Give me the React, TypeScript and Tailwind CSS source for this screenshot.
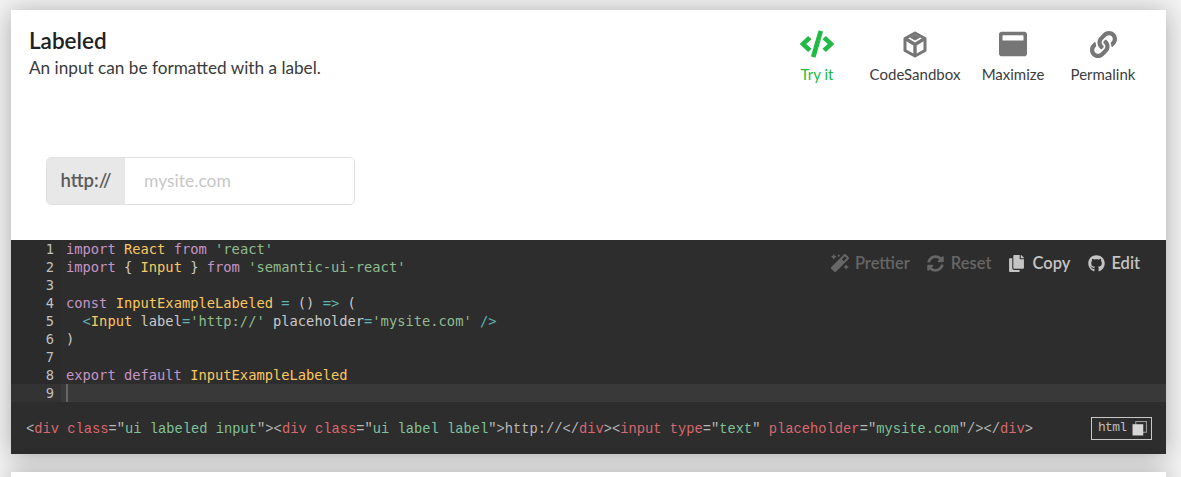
import { FaCode, FaCopy, FaGithub, FaLink, FaMagic, FaSyncAlt, FaWindowMaximize } from "react-icons/fa";
import type { ReactNode } from "react";

const sans = "font-['Lato','Open_Sans',sans-serif]";
const mono = "font-['DejaVu_Sans_Mono','Liberation_Mono',monospace]";

const K = ({ children }: { children: ReactNode }) => <span className="text-[#c695c6]">{children}</span>;
const C = ({ children }: { children: ReactNode }) => <span className="text-[#fac863]">{children}</span>;
const S = ({ children }: { children: ReactNode }) => <span className="text-[#8fbc8f]">{children}</span>;
const O = ({ children }: { children: ReactNode }) => <span className="text-[#5fb3b3]">{children}</span>;
const R = ({ children }: { children: ReactNode }) => <span className="text-[#d9686f]">{children}</span>;
const G = ({ children }: { children: ReactNode }) => <span className="text-[#7fc29b]">{children}</span>;

const lines: ReactNode[] = [
  <><K>import</K> <C>React</C> <K>from</K> <S>'react'</S></>,
  <><K>import</K> {"{ "}<C>Input</C>{" } "}<K>from</K> <S>'semantic-ui-react'</S></>,
  <></>,
  <><K>const</K> <C>InputExampleLabeled</C> <O>=</O> () <O>=&gt;</O> (</>,
  <>  <O>&lt;</O><C>Input</C> label<O>=</O><S>'http://'</S> placeholder<O>=</O><S>'mysite.com'</S> <O>/&gt;</O></>,
  <>)</>,
  <></>,
  <><K>export</K> <K>default</K> <C>InputExampleLabeled</C></>,
  <></>,
];

function SandboxIcon() {
  return (
    <svg viewBox="0 0 24 27" className="h-[27px] w-[24px]" fill="none" stroke="#767676" strokeLinejoin="round">
      <path d="M12 2 22 7.5v12L12 25 2 19.5v-12Z" strokeWidth="3" />
      <path d="M3 8 12 13.5 21 8M12 13.5V24" strokeWidth="3.4" />
      <path d="M7.5 6.5 12 4l4.5 2.5L12 9Z" fill="#767676" strokeWidth="1" />
    </svg>
  );
}

function Action({ icon, label, className, active }: { icon: ReactNode; label: string; className: string; active?: boolean }) {
  return (
    <div className={`flex flex-col items-center ${className}`}>
      <div className={`flex h-[30px] items-center justify-center ${active ? "text-[#21ba45]" : "text-[#767676]"}`}>{icon}</div>
      <div className={`mt-[5px] text-[15px] leading-[20px] ${active ? "text-[#21ba45]" : "text-[#3d3d3d]"}`}>{label}</div>
    </div>
  );
}

function Tool({ icon, label, on, className }: { icon: ReactNode; label: string; on?: boolean; className: string }) {
  return (
    <div className={`flex items-center font-semibold ${on ? "text-[#c4c4c4]" : "text-[#666666]"} ${className}`}>
      {icon}
      <span className="text-[16.5px] leading-[20px]">{label}</span>
    </div>
  );
}

export default function App() {
  return (
    <div className={`h-[477px] overflow-hidden bg-[#f3f3f3] pl-[11px] pr-[15px] pt-[10px] ${sans}`}>
      <div className="bg-white shadow-[0_2px_24px_rgba(0,0,0,0.3)]">
        <div className="flex h-[230px] flex-col">
          <div className="flex pl-[18px] pr-[22px] pt-[16px]">
            <div>
              <h1 className="text-[22.5px] font-semibold leading-[30px] text-[#212121]">Labeled</h1>
              <p className="-mt-[1px] text-[17.2px] leading-[25px] text-[#3a3a3a]">An input can be formatted with a label.</p>
            </div>
            <div className="ml-auto flex pt-[3px]">
              <Action active className="w-[98px]" label="Try it" icon={<FaCode className="text-[34px]" />} />
              <Action className="w-[98px]" label="CodeSandbox" icon={<SandboxIcon />} />
              <Action className="w-[98px]" label="Maximize" icon={<FaWindowMaximize className="text-[28px]" />} />
              <Action className="w-[82px]" label="Permalink" icon={<FaLink className="text-[27px]" />} />
            </div>
          </div>
          <div className="pl-[35px] pt-[73px]">
            <div className="flex h-[48px] w-[309px] overflow-hidden rounded-[5px] border border-[#e0e0e0]">
              <div className="flex w-[78px] items-center justify-center bg-[#e8e8e8] text-[18.5px] font-semibold text-[#5a5a5a]">http://</div>
              <input
                placeholder="mysite.com"
                className="min-w-0 flex-1 bg-white pl-[19px] text-[17.5px] text-[#333] outline-none placeholder:text-[#c7c7c7]"
              />
            </div>
          </div>
        </div>

        <div className="bg-[#2d2d2d]">
          <div className={`relative text-[13.75px] leading-[18px] text-[#c9c9c9] ${mono}`}>
            {lines.map((line, i) => (
              <div key={i} className={`flex h-[18px] ${i === 8 ? "bg-[#393939]" : ""}`}>
                <div className={`w-[50px] shrink-0 pr-[7px] text-right text-[#c0c0c0] ${i === 8 ? "bg-[#333333]" : "bg-[#2b2b2b]"}`}>{i + 1}</div>
                <div className="w-[5px] shrink-0" />
                {i === 8 ? <div className="w-[2px] bg-[#666666]" /> : <div className="whitespace-pre">{line}</div>}
              </div>
            ))}
            <div className={`absolute right-[26px] top-[13px] flex ${sans}`}>
              <Tool className="mr-[17px]" label="Prettier" icon={<FaMagic className="mr-[6px] text-[18px]" />} />
              <Tool className="mr-[17px]" label="Reset" icon={<FaSyncAlt className="mr-[7px] text-[17px]" />} />
              <Tool on className="mr-[18px]" label="Copy" icon={<FaCopy className="mr-[7px] text-[17px]" />} />
              <Tool on className="" label="Edit" icon={<FaGithub className="mr-[6px] text-[17px]" />} />
            </div>
          </div>

          <div className={`flex h-[52px] items-center pl-[15px] pr-[14px] text-[13.75px] text-[#b9b9b9] ${mono}`}>
            <code className="whitespace-pre pt-[4px]">
              &lt;<R>div</R> <R>class</R>="<G>ui labeled input</G>"&gt;&lt;<R>div</R> <R>class</R>="<G>ui label label</G>"&gt;http://&lt;/<R>div</R>&gt;&lt;<R>input</R> <R>type</R>="<G>text</G>" <R>placeholder</R>="<G>mysite.com</G>"/&gt;&lt;/<R>div</R>&gt;
            </code>
            <div className="ml-auto flex h-[23px] w-[61px] items-center border border-[#c8c8c8] pl-[6px] font-['Liberation_Mono',monospace] text-[13px] text-[#bdbdbd]">
              <span className="w-[28px] tracking-[-0.7px]">html</span>
              <svg viewBox="0 0 14 14" className="ml-[6px] h-[15px] w-[15px] shrink-0">
                <rect x="3.5" y="0.5" width="10" height="10" fill="none" stroke="#999999" />
                <rect x="0.5" y="3" width="10" height="10.5" fill="#d6d6d6" />
              </svg>
            </div>
          </div>
        </div>
      </div>

      <div className="mt-[18px] h-[60px] bg-white shadow-[0_2px_24px_rgba(0,0,0,0.3)]" />
    </div>
  );
}
